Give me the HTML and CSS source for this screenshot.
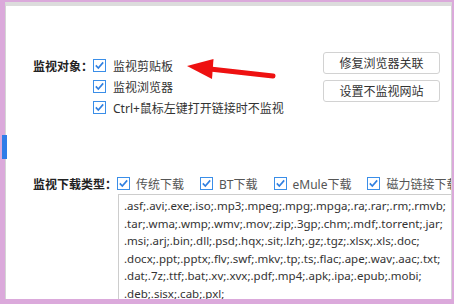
FILE: index.html
```html
<!DOCTYPE html>
<html lang="zh-CN">
<head>
<meta charset="utf-8">
<link rel="stylesheet" href="styles.css">
</head>
<body>
<div class="frame">
  <div class="panel">
    <div class="sec1">
      <div class="left">
        <div class="label">监视对象：</div>
        <div class="opts">
          <div class="opt"><span class="cb"><svg viewBox="0 0 13 13" width="13" height="13"><rect x="0.5" y="0.5" width="12" height="12" fill="#fff" stroke="#3a8ee8"/><path d="M2.8 6.4 L5.3 9 L10.2 3.4" fill="none" stroke="#2f7fe0" stroke-width="1.6"/></svg></span><span>监视剪贴板</span></div>
          <div class="opt"><span class="cb"><svg viewBox="0 0 13 13" width="13" height="13"><rect x="0.5" y="0.5" width="12" height="12" fill="#fff" stroke="#3a8ee8"/><path d="M2.8 6.4 L5.3 9 L10.2 3.4" fill="none" stroke="#2f7fe0" stroke-width="1.6"/></svg></span><span>监视浏览器</span></div>
          <div class="opt"><span class="cb"><svg viewBox="0 0 13 13" width="13" height="13"><rect x="0.5" y="0.5" width="12" height="12" fill="#fff" stroke="#3a8ee8"/><path d="M2.8 6.4 L5.3 9 L10.2 3.4" fill="none" stroke="#2f7fe0" stroke-width="1.6"/></svg></span><span>Ctrl+鼠标左键打开链接时不监视</span></div>
        </div>
      </div>
      <div class="buttons">
        <div class="btn">修复浏览器关联</div>
        <div class="btn">设置不监视网站</div>
      </div>
    </div>
    <div class="sec2">
      <div class="row2">
        <div class="label">监视下载类型：</div>
        <div class="item"><span class="cb"><svg viewBox="0 0 13 13" width="13" height="13"><rect x="0.5" y="0.5" width="12" height="12" fill="#fff" stroke="#3a8ee8"/><path d="M2.8 6.4 L5.3 9 L10.2 3.4" fill="none" stroke="#2f7fe0" stroke-width="1.6"/></svg></span><span>传统下载</span></div>
        <div class="item"><span class="cb"><svg viewBox="0 0 13 13" width="13" height="13"><rect x="0.5" y="0.5" width="12" height="12" fill="#fff" stroke="#3a8ee8"/><path d="M2.8 6.4 L5.3 9 L10.2 3.4" fill="none" stroke="#2f7fe0" stroke-width="1.6"/></svg></span><span>BT下载</span></div>
        <div class="item"><span class="cb"><svg viewBox="0 0 13 13" width="13" height="13"><rect x="0.5" y="0.5" width="12" height="12" fill="#fff" stroke="#3a8ee8"/><path d="M2.8 6.4 L5.3 9 L10.2 3.4" fill="none" stroke="#2f7fe0" stroke-width="1.6"/></svg></span><span>eMule下载</span></div>
        <div class="item"><span class="cb"><svg viewBox="0 0 13 13" width="13" height="13"><rect x="0.5" y="0.5" width="12" height="12" fill="#fff" stroke="#3a8ee8"/><path d="M2.8 6.4 L5.3 9 L10.2 3.4" fill="none" stroke="#2f7fe0" stroke-width="1.6"/></svg></span><span>磁力链接下载</span></div>
      </div>
      <div class="textbox">
        <div>.asf;.avi;.exe;.iso;.mp3;.mpeg;.mpg;.mpga;.ra;.rar;.rm;.rmvb;</div>
        <div>.tar;.wma;.wmp;.wmv;.mov;.zip;.3gp;.chm;.mdf;.torrent;.jar;</div>
        <div>.msi;.arj;.bin;.dll;.psd;.hqx;.sit;.lzh;.gz;.tgz;.xlsx;.xls;.doc;</div>
        <div>.docx;.ppt;.pptx;.flv;.swf;.mkv;.tp;.ts;.flac;.ape;.wav;.aac;.txt;</div>
        <div>.dat;.7z;.ttf;.bat;.xv;.xvx;.pdf;.mp4;.apk;.ipa;.epub;.mobi;</div>
        <div>.deb;.sisx;.cab;.pxl;</div>
      </div>
    </div>
  </div>
  <div class="tab-mark"></div>
  <svg class="arrow" viewBox="0 0 100 40" width="100" height="40">
    <path d="M30 19 L93 26" stroke="#ee1111" stroke-width="5" stroke-linecap="round" fill="none"/>
    <polygon points="7,16 33.5,9 32,29" fill="#ee1111"/>
  </svg>
</div>
</body>
</html>
```
FILE: styles.css
```css
html, body {
  margin: 0;
  padding: 0;
}
body {
  width: 454px;
  height: 304px;
  overflow: hidden;
  font-family: "Noto Sans", "Noto Sans CJK SC", sans-serif;
  font-size: 12px;
  color: #333;
}
.frame {
  position: relative;
  box-sizing: border-box;
  width: 454px;
  height: 304px;
  background: #dba9db;
  padding: 2px 2px 5px 5px;
}
.panel {
  box-sizing: border-box;
  height: 100%;
  background: #fff;
  border-top: 4px solid #dcdcdc;
  border-left: 1px solid #d4d4d4;
  border-right: 1px solid #d4d4d4;
  overflow: hidden;
  padding-left: 27px;
}
.sec1 {
  display: flex;
  align-items: flex-start;
  padding-top: 46px;
}
.left {
  display: flex;
  margin-top: 3px;
}
.label {
  line-height: 21px;
  font-weight: 700;
  color: #222;
  white-space: nowrap;
  font-family: "Noto Sans CJK SC", sans-serif;
}
.opts {
  display: flex;
  flex-direction: column;
}
.opt, .item {
  display: flex;
  align-items: center;
  height: 21px;
  white-space: nowrap;
}
.cb {
  display: flex;
  width: 13px;
  height: 13px;
}
.opt .cb {
  margin-right: 7px;
}
.item .cb {
  margin-right: 6px;
}
.buttons {
  margin-left: auto;
  margin-right: 11px;
  display: flex;
  flex-direction: column;
  gap: 6px;
}
.btn {
  box-sizing: border-box;
  width: 117px;
  height: 22px;
  border: 1px solid #d2d2d2;
  border-radius: 3px;
  background: #fff;
  display: flex;
  align-items: center;
  justify-content: center;
  color: #333;
}
.sec2 {
  margin-top: 55px;
}
.row2 {
  display: flex;
  align-items: center;
  height: 21px;
  white-space: nowrap;
}
.item {
  margin-right: 16px;
  color: #555;
}
.textbox {
  margin-left: 85px;
  width: 400px;
  height: 120px;
  border: 1px solid #cdcdcd;
  padding: 2px 5px;
  line-height: 17.5px;
  white-space: nowrap;
  color: #333;
  font-size: 11.5px;
}
.tab-mark {
  position: absolute;
  left: 2px;
  top: 135px;
  width: 5px;
  height: 24px;
  background: #2f7de8;
}
.arrow {
  position: absolute;
  left: 180px;
  top: 50px;
}
```
